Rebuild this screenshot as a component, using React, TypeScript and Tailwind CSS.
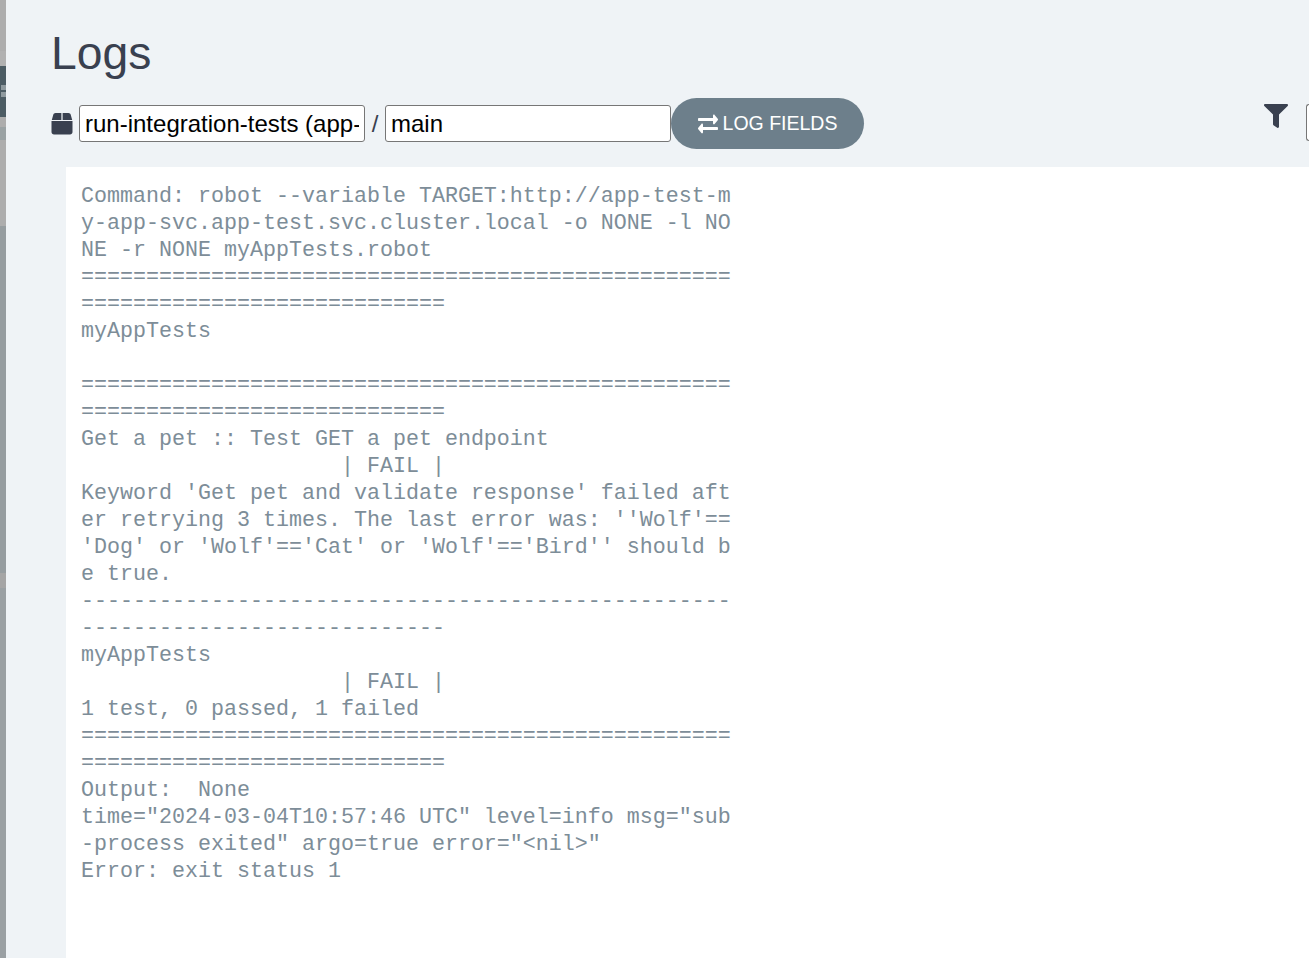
import { FaExchangeAlt, FaFilter } from "react-icons/fa";

// the zero width space keeps the break after == where the real log wraps
const logText = `Command: robot --variable TARGET:http://app-test-my-app-svc.app-test.svc.cluster.local -o NONE -l NONE -r NONE myAppTests.robot
==============================================================================
myAppTests

==============================================================================
Get a pet :: Test GET a pet endpoint
                    | FAIL |
Keyword 'Get pet and validate response' failed after retrying 3 times. The last error was: ''Wolf'==\u200B'Dog' or 'Wolf'=='Cat' or 'Wolf'=='Bird'' should be true.
------------------------------------------------------------------------------
myAppTests
                    | FAIL |
1 test, 0 passed, 1 failed
==============================================================================
Output:  None
time="2024-03-04T10:57:46 UTC" level=info msg="sub-process exited" argo=true error="<nil>"
Error: exit status 1`;

const App = () => {
    return (
        <div className="flex h-[958px] w-full overflow-hidden bg-[#eff3f6] font-['Liberation_Sans',Arial,sans-serif] text-[#39404f]">
            {/* Page behind the drawer */}
            <div className="flex w-[6px] shrink-0 flex-col bg-[#9aa0a3]">
                <div className="h-[51px] bg-[#adadad]" />
                <div className="h-[15px] bg-[#b1b1b1]" />
                <div className="flex h-[51px] flex-col items-start gap-[2px] bg-[#4c5c64] pl-[1px] pt-[19px]">
                    <div className="h-[5px] w-[5px] bg-[#8f9a9f]" />
                    <div className="h-[5px] w-[5px] bg-[#8f9a9f]" />
                </div>
                <div className="h-[10px] bg-[#adadad]" />
                <div className="h-[13px] bg-[#9aa2a4]" />
                <div className="h-[86px] bg-[#adadad]" />
                <div className="h-[347px] bg-[#969da0]" />
                <div className="h-[15px] bg-[#a5a5a5]" />
            </div>

            <div className="flex min-w-0 flex-1 flex-col">
                <h1 className="ml-[45px] mt-[24px] h-[58px] text-[46.25px] leading-[58px]">Logs</h1>

                <div className="mt-[16px] flex h-[51px] items-center">
                    <svg className="ml-[45px] mr-[6px] h-[23px] w-[22px] shrink-0" viewBox="0 0 22 23" fill="currentColor">
                        <path d="M4.5 1H10.4V8H0.8L2.2 2.9C2.6 1.7 3.4 1 4.5 1Z" />
                        <path d="M11.6 1H17.5C18.6 1 19.4 1.7 19.8 2.9L21.2 8H11.6Z" />
                        <path d="M0.5 9H21.5V20C21.5 21.4 20.4 22.5 19 22.5H3C1.6 22.5 0.5 21.4 0.5 20Z" />
                    </svg>
                    <input
                        readOnly
                        value="run-integration-tests (app-test)"
                        className="h-[37px] w-[286px] rounded-[3px] border border-[#767676] bg-white px-[5px] text-[24px] text-black outline-none"
                    />
                    <span className="w-[20px] text-center text-[24px]">/</span>
                    <input
                        readOnly
                        value="main"
                        className="h-[37px] w-[286px] rounded-[3px] border border-[#767676] bg-white px-[5px] text-[24px] text-black outline-none"
                    />
                    <button className="flex h-[51px] w-[193px] items-center justify-center gap-[5px] rounded-full bg-[#6d7f8b] text-[19.5px] text-white">
                        <FaExchangeAlt className="h-[24px] w-[20px]" preserveAspectRatio="none" />
                        LOG FIELDS
                    </button>
                    <div className="ml-auto flex items-center">
                        <FaFilter className="mb-[15px] mr-[18px]" size={24} />
                        <div className="mb-[2px] h-[37px] w-[3px] rounded-l-[3px] border border-r-0 border-[#767676] bg-white" />
                    </div>
                </div>

                <div className="ml-[60px] mt-[18px] flex-1 bg-white px-[15px] pt-[16px]">
                    <pre className="w-[651px] whitespace-pre-wrap break-all font-['Liberation_Mono','Courier_New',monospace] text-[21.67px] leading-[27px] text-[#7d8d98]">
                        {logText}
                    </pre>
                </div>
            </div>
        </div>
    );
};

export default App;
